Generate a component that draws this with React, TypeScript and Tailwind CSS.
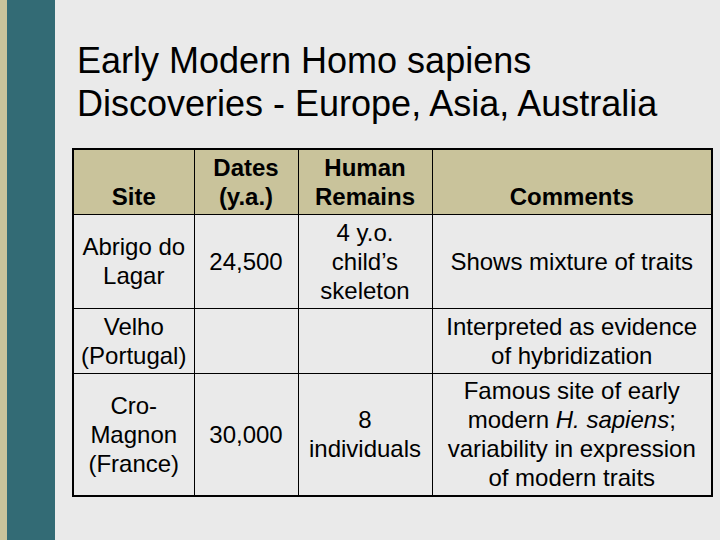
export default function App() {
  const cell = "border border-black px-1 text-center";
  return (
    <div className="flex h-[540px] w-[720px] bg-[#eaeaea] font-['Liberation_Sans',Arial,sans-serif] text-black">
      <div className="w-[7px] bg-[#c9c39b]" />
      <div className="w-[48px] bg-[#336b75]" />
      <div className="flex flex-1 flex-col">
        <h1 className="mt-[39px] ml-[22px] text-[36px] leading-[43px]">
          Early Modern Homo sapiens
          <br />
          Discoveries - Europe, Asia, Australia
        </h1>
        <table className="mt-[23px] ml-[17px] w-[639px] table-fixed border-collapse border-2 border-black text-[24px] leading-[29px]">
          <colgroup>
            <col className="w-[121px]" />
            <col className="w-[104px]" />
            <col className="w-[134px]" />
            <col className="w-[280px]" />
          </colgroup>
          <thead>
            <tr className="h-[65px] bg-[#c9c39b] font-bold">
              <th className={`${cell} pb-[3px] align-bottom`}>Site</th>
              <th className={`${cell} pb-[3px] align-bottom`}>
                Dates
                <br />
                (y.a.)
              </th>
              <th className={`${cell} pb-[3px] align-bottom`}>
                Human
                <br />
                Remains
              </th>
              <th className={`${cell} pb-[3px] align-bottom`}>Comments</th>
            </tr>
          </thead>
          <tbody>
            <tr className="h-[94px]">
              <td className={cell}>
                Abrigo do
                <br />
                Lagar
              </td>
              <td className={cell}>24,500</td>
              <td className={cell}>
                4 y.o.
                <br />
                child’s
                <br />
                skeleton
              </td>
              <td className={cell}>Shows mixture of traits</td>
            </tr>
            <tr className="h-[65px]">
              <td className={cell}>
                Velho
                <br />
                (Portugal)
              </td>
              <td className={cell} />
              <td className={cell} />
              <td className={cell}>
                Interpreted as evidence
                <br />
                of hybridization
              </td>
            </tr>
            <tr className="h-[123px]">
              <td className={cell}>
                Cro-
                <br />
                Magnon
                <br />
                (France)
              </td>
              <td className={cell}>30,000</td>
              <td className={cell}>
                8
                <br />
                individuals
              </td>
              <td className={cell}>
                Famous site of early
                <br />
                modern <i>H. sapiens</i>;
                <br />
                variability in expression
                <br />
                of modern traits
              </td>
            </tr>
          </tbody>
        </table>
      </div>
    </div>
  );
}
